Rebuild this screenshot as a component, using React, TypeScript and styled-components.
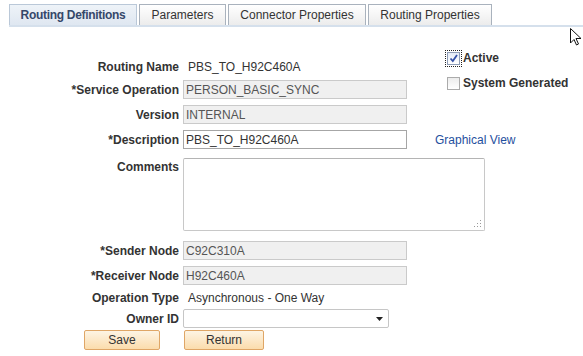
import React from "react";
import styled, { createGlobalStyle } from "styled-components";

const GlobalStyle = createGlobalStyle`
  html, body {
    margin: 0;
    padding: 0;
    background: #ffffff;
  }
  body {
    font-family: "Liberation Sans", Arial, sans-serif;
    font-size: 12px;
    color: #333333;
  }
`;

const tabs = [
  { label: "Routing Definitions", width: 128, active: true },
  { label: "Parameters", width: 87, active: false },
  { label: "Connector Properties", width: 138, active: false },
  { label: "Routing Properties", width: 124, active: false },
];

const App: React.FunctionComponent = () => {
  return (
    <Page>
      <GlobalStyle />
      <TabBar>
        {tabs.map((t) => (
          <Tab key={t.label} $w={t.width} $active={t.active}>
            {t.label}
          </Tab>
        ))}
      </TabBar>

      <Header>
        <Column>
          <Row>
            <Label>Routing Name</Label>
            <Value>PBS_TO_H92C460A</Value>
          </Row>
          <Row $mt={4}>
            <Label>*Service Operation</Label>
            <Field readOnly $locked value="PERSON_BASIC_SYNC" />
          </Row>
          <Row $mt={6}>
            <Label>Version</Label>
            <Field readOnly $locked value="INTERNAL" />
          </Row>
        </Column>

        <Checks>
          <CheckRow>
            <Box $checked $focus>
              <svg width="9" height="9" viewBox="0 0 9 9">
                <path
                  d="M1.5 4.5 L3.8 7 L8 1"
                  fill="none"
                  stroke="#3552a8"
                  strokeWidth="1.8"
                />
              </svg>
            </Box>
            <CheckLabel>Active</CheckLabel>
          </CheckRow>
          <CheckRow>
            <Box />
            <CheckLabel>System Generated</CheckLabel>
          </CheckRow>
        </Checks>
      </Header>

      <Row $mt={6}>
        <Label>*Description</Label>
        <Field readOnly value="PBS_TO_H92C460A" />
        <LinkText href="#">Graphical View</LinkText>
      </Row>

      <Row $mt={9}>
        <Label $top>Comments</Label>
        <AreaWrap>
          <Area />
          <Grip width="8" height="8" viewBox="0 0 8 8">
            <rect x="6" y="0" width="1" height="1" fill="#9a9a9a" />
            <rect x="3" y="3" width="1" height="1" fill="#9a9a9a" />
            <rect x="6" y="3" width="1" height="1" fill="#9a9a9a" />
            <rect x="0" y="6" width="1" height="1" fill="#9a9a9a" />
            <rect x="3" y="6" width="1" height="1" fill="#9a9a9a" />
            <rect x="6" y="6" width="1" height="1" fill="#9a9a9a" />
          </Grip>
        </AreaWrap>
      </Row>

      <Row $mt={10}>
        <Label>*Sender Node</Label>
        <Field readOnly $locked value="C92C310A" />
      </Row>
      <Row $mt={6}>
        <Label>*Receiver Node</Label>
        <Field readOnly $locked value="H92C460A" />
      </Row>
      <Row $mt={3}>
        <Label>Operation Type</Label>
        <Value>Asynchronous - One Way</Value>
      </Row>
      <Row $mt={2}>
        <Label>Owner ID</Label>
        <SelectWrap>
          <Select defaultValue="">
            <option value=""></option>
          </Select>
          <Caret width="7" height="4" viewBox="0 0 7 4">
            <path d="M0 0 H7 L3.5 4 Z" fill="#222222" />
          </Caret>
        </SelectWrap>
      </Row>

      <ButtonBar>
        <Button $w={76}>Save</Button>
        <Button $w={80}>Return</Button>
      </ButtonBar>

      <Cursor width="14" height="20" viewBox="0 0 14 20">
        <path
          d="M1.5 1.5 L1.5 16 L5 12.5 L7.5 18 L9.5 17 L7 11.5 L12 11.5 Z"
          fill="#ffffff"
          stroke="#111111"
          strokeWidth="1"
        />
      </Cursor>
    </Page>
  );
};

const Page = styled.div`
  position: relative;
  width: 583px;
  height: 356px;
  overflow: hidden;
`;

const TabBar = styled.div`
  display: flex;
  gap: 2px;
  margin: 4px 0 0 9px;
  border-bottom: 2px solid #d5e0ec;
`;

const Tab = styled.div<{ $w: number; $active?: boolean }>`
  box-sizing: border-box;
  width: ${(p) => p.$w}px;
  height: 21px;
  display: flex;
  align-items: center;
  justify-content: center;
  white-space: nowrap;
  border: 1px solid ${(p) => (p.$active ? "#bac8d8" : "#a9b2bd")};
  border-bottom: none;
  background: ${(p) =>
    p.$active
      ? "linear-gradient(#eef3f8, #dfe7f1)"
      : "linear-gradient(#ffffff, #ececec)"};
  color: ${(p) => (p.$active ? "#35476a" : "#333333")};
  font-weight: ${(p) => (p.$active ? "bold" : "normal")};
  letter-spacing: ${(p) => (p.$active ? "-0.3px" : "0")};
`;

const Header = styled.div`
  display: flex;
  align-items: flex-start;
  margin-top: 21px;
`;

const Column = styled.div`
  display: flex;
  flex-direction: column;
  margin-top: 9px;
  width: 407px;
`;

const Checks = styled.div`
  display: flex;
  flex-direction: column;
  gap: 5px;
  margin-left: 40px;
`;

const CheckRow = styled.div`
  display: flex;
  align-items: center;
  gap: 3px;
  height: 20px;
`;

const Box = styled.span<{ $checked?: boolean; $focus?: boolean }>`
  box-sizing: border-box;
  width: 13px;
  height: 13px;
  display: flex;
  align-items: center;
  justify-content: center;
  border: 1px solid ${(p) => (p.$checked ? "#8c9bb5" : "#ababab")};
  background: ${(p) =>
    p.$checked
      ? "linear-gradient(#e4ebf6, #ffffff)"
      : "linear-gradient(#ececec, #ffffff)"};
  outline: ${(p) => (p.$focus ? "1px dotted #222222" : "none")};
  outline-offset: 1px;
`;

const CheckLabel = styled.span`
  font-weight: bold;
  color: #333333;
`;

const Row = styled.div<{ $mt?: number }>`
  display: grid;
  grid-template-columns: 179px auto auto;
  justify-content: start;
  column-gap: 4px;
  align-items: center;
  min-height: 19px;
  margin-top: ${(p) => p.$mt ?? 0}px;
`;

const Label = styled.label<{ $top?: boolean }>`
  text-align: right;
  font-weight: bold;
  white-space: nowrap;
  color: #333333;
  align-self: ${(p) => (p.$top ? "start" : "center")};
  padding-top: ${(p) => (p.$top ? "2px" : "0")};
`;

const Value = styled.span`
  padding-left: 5px;
  color: #333333;
  white-space: nowrap;
`;

const Field = styled.input<{ $locked?: boolean }>`
  box-sizing: border-box;
  width: 224px;
  height: 19px;
  margin: 0;
  padding: 0 2px;
  font-family: "Liberation Sans", Arial, sans-serif;
  font-size: 12px;
  border: 1px solid ${(p) => (p.$locked ? "#cacaca" : "#a6a6a6")};
  border-radius: 0;
  background: ${(p) => (p.$locked ? "#f0f0f0" : "#ffffff")};
  color: ${(p) => (p.$locked ? "#555555" : "#333333")};
  outline: none;
`;

const LinkText = styled.a`
  margin-left: 24px;
  color: #1f4f9e;
  text-decoration: none;
  white-space: nowrap;
`;

const AreaWrap = styled.div`
  position: relative;
  width: 302px;
  height: 73px;
`;

const Area = styled.textarea`
  box-sizing: border-box;
  display: block;
  width: 302px;
  height: 73px;
  margin: 0;
  padding: 2px;
  border: 1px solid #c8c8c8;
  border-top-color: #b4b4b4;
  border-radius: 2px;
  resize: none;
  outline: none;
  font-family: "Liberation Sans", Arial, sans-serif;
  font-size: 12px;
`;

const Grip = styled.svg`
  position: absolute;
  right: 3px;
  bottom: 3px;
`;

const SelectWrap = styled.div`
  position: relative;
  width: 206px;
  height: 19px;
`;

const Select = styled.select`
  box-sizing: border-box;
  width: 206px;
  height: 19px;
  margin: 0;
  padding: 0 2px;
  appearance: none;
  border: 1px solid #c6c6c6;
  border-radius: 2px;
  background: #ffffff;
  font-family: "Liberation Sans", Arial, sans-serif;
  font-size: 12px;
  outline: none;
`;

const Caret = styled.svg`
  position: absolute;
  right: 6px;
  top: 8px;
  pointer-events: none;
`;

const ButtonBar = styled.div`
  display: flex;
  gap: 24px;
  padding-left: 84px;
  margin-top: 2px;
`;

const Button = styled.button<{ $w: number }>`
  box-sizing: border-box;
  width: ${(p) => p.$w}px;
  height: 20px;
  margin: 0;
  padding: 0;
  border: 1px solid #dfa666;
  border-radius: 2px;
  background: linear-gradient(#fdf4e4, #fbdcac);
  color: #333333;
  font-family: "Liberation Sans", Arial, sans-serif;
  font-size: 12px;
`;

const Cursor = styled.svg`
  position: absolute;
  left: 569px;
  top: 27px;
`;

export default App;
